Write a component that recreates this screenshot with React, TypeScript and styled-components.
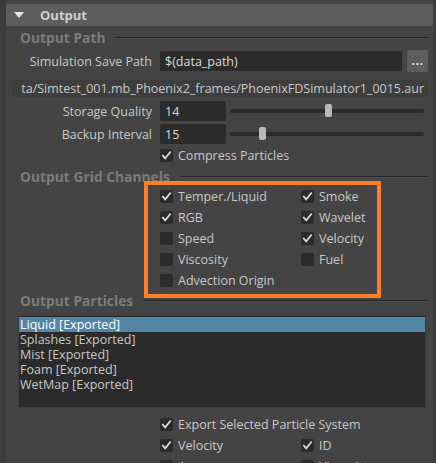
import * as React from "react";
import styled, { createGlobalStyle } from "styled-components";

const GlobalStyle = createGlobalStyle`
  html, body {
    margin: 0;
    padding: 0;
    background: #444444;
  }
  body {
    font-family: "Open Sans", "Liberation Sans", sans-serif;
    font-size: 12.5px;
    color: #c8c8c8;
  }
`;

const Window = styled.div`
  width: 436px;
  height: 463px;
  overflow: hidden;
  display: flex;
  background: #444444;
`;

const Gutter = styled.div<{ $w: number }>`
  width: ${(p) => p.$w}px;
  flex-shrink: 0;
  background: #3c3c3c;
`;

const Main = styled.div`
  flex: 1;
  min-width: 0;
  padding-top: 4px;
`;

const FrameHeader = styled.div`
  height: 22px;
  display: flex;
  align-items: center;
  gap: 16px;
  padding-left: 8px;
  background: #5d5d5d;
  border-radius: 2px;
  font-size: 13px;
  font-weight: 700;
  color: #cfcfcf;
`;

const Arrow = styled.div`
  width: 0;
  height: 0;
  border-left: 5.5px solid transparent;
  border-right: 5.5px solid transparent;
  border-top: 6px solid #e6e6e6;
`;

const Body = styled.div`
  padding: 0 5px 0 14px;
`;

const SectionHead = styled.div<{ $top: number }>`
  height: 14px;
  margin-top: ${(p) => p.$top}px;
  display: flex;
  align-items: center;
  gap: 10px;
  font-size: 13.8px;
  font-weight: 700;
  color: #7b7b7b;
  white-space: nowrap;
`;

const Rule = styled.div`
  flex: 1;
  height: 1px;
  background: #262626;
  box-shadow: 0 1px 0 #4c4c4c;
`;

const FormRow = styled.div<{ $top: number; $h: number }>`
  display: grid;
  grid-template-columns: 132px 1fr;
  column-gap: 8px;
  align-items: center;
  height: ${(p) => p.$h}px;
  margin-top: ${(p) => p.$top}px;
`;

const Label = styled.div`
  text-align: right;
  white-space: nowrap;
`;

const Control = styled.div`
  display: flex;
  align-items: center;
  gap: 5px;
  min-width: 0;
`;

const Field = styled.div<{ $w?: number }>`
  height: 20px;
  ${(p) => (p.$w ? `width: ${p.$w}px; flex-shrink: 0;` : "flex: 1;")}
  display: flex;
  align-items: center;
  padding-left: 5px;
  box-sizing: border-box;
  background: #2b2b2b;
  border-radius: 2px;
  color: #dcdcdc;
`;

const BrowseButton = styled.div`
  width: 21px;
  height: 22px;
  flex-shrink: 0;
  display: flex;
  align-items: flex-end;
  justify-content: center;
  padding-bottom: 5px;
  box-sizing: border-box;
  background: #5d5d5d;
  border-radius: 2px;
  color: #e0e0e0;
  font-weight: 700;
  line-height: 1;
  letter-spacing: 0.5px;
`;

const PathLine = styled.div`
  height: 17px;
  margin: 8px 0 0 -8px;
  display: flex;
  justify-content: flex-end;
  align-items: center;
  padding-right: 4px;
  overflow: hidden;
  white-space: nowrap;
  background: #3e3e3e;
  border-radius: 2px;
  color: #c8c8c8;
`;

const Slider = styled.div`
  position: relative;
  flex: 1;
  height: 20px;
  margin: 0 4px 0 -1px;
`;

const Track = styled.div`
  position: absolute;
  left: 0;
  right: 0;
  top: 8px;
  height: 4px;
  border-radius: 2px;
  background: #2b2b2b;
`;

const Thumb = styled.div`
  position: absolute;
  top: 3px;
  width: 7px;
  height: 13px;
  border-radius: 2px;
  background: #b9b9b9;
`;

const CheckRow = styled.div`
  display: flex;
  align-items: center;
  gap: 5px;
  white-space: nowrap;
  line-height: 15px;
`;

const Box = styled.div`
  width: 13px;
  height: 13px;
  flex-shrink: 0;
  border-radius: 2px;
  background: #2b2b2b;
  display: flex;
  align-items: center;
  justify-content: center;
`;

const CheckGrid = styled.div<{ $top: number }>`
  position: relative;
  margin: ${(p) => p.$top}px 0 0 140px;
  display: grid;
  grid-template-columns: 141px 1fr;
  grid-template-rows: repeat(5, 21px);
  grid-auto-flow: column;
`;

const PlainGrid = styled.div<{ $top: number }>`
  margin: ${(p) => p.$top}px 0 0 140px;
  display: grid;
  grid-template-columns: 141px 1fr;
  grid-auto-rows: 21px;
`;

const Highlight = styled.div`
  position: absolute;
  top: -5px;
  left: -16px;
  width: 237px;
  bottom: -7px;
  box-sizing: border-box;
  border: 4px solid #ff7f27;
  pointer-events: none;
`;

const ListBox = styled.div`
  width: 408px;
  height: 93px;
  margin: 8px 0 0 -2px;
  box-sizing: border-box;
  padding-top: 1px;
  background: #2b2b2b;
  border: 1px solid #3a3a3a;
  border-radius: 1px;
`;

const ListItem = styled.div<{ $selected?: boolean }>`
  height: 15px;
  line-height: 15px;
  padding-left: 1px;
  white-space: nowrap;
  background: ${(p) => (p.$selected ? "#5285a6" : "transparent")};
  color: ${(p) => (p.$selected ? "#ffffff" : "#c8c8c8")};
`;

const Tick = () => (
  <svg width="13" height="13" viewBox="0 0 13 13">
    <path d="M2.8 6.6 L5.2 9.4 L10.2 3.2" fill="none" stroke="#dedede" strokeWidth="1.7" strokeLinecap="square" />
  </svg>
);

const Check = ({ label, on }: { label: string; on?: boolean }) => (
  <CheckRow>
    <Box>{on && <Tick />}</Box>
    <span>{label}</span>
  </CheckRow>
);

const SliderField = ({ label, value, pos, top }: { label: string; value: string; pos: number; top: number }) => (
  <FormRow $top={top} $h={20}>
    <Label>{label}</Label>
    <Control>
      <Field $w={66}>{value}</Field>
      <Slider>
        <Track />
        <Thumb style={{ left: `calc((100% - 7px) * ${pos})` }} />
      </Slider>
    </Control>
  </FormRow>
);

const channels = [
  { label: "Temper./Liquid", on: true },
  { label: "RGB", on: true },
  { label: "Speed", on: false },
  { label: "Viscosity", on: false },
  { label: "Advection Origin", on: false },
  { label: "Smoke", on: true },
  { label: "Wavelet", on: true },
  { label: "Velocity", on: true },
  { label: "Fuel", on: false },
];

const particles = ["Liquid", "Splashes", "Mist", "Foam", "WetMap"];

const App = () => {
  return (
    <>
      <GlobalStyle />
      <Window>
        <Gutter $w={6} />
        <Main>
          <FrameHeader>
            <Arrow />
            <span>Output</span>
          </FrameHeader>
          <Body>
            <SectionHead $top={4}>
              <span>Output Path</span>
              <Rule />
            </SectionHead>
            <FormRow $top={6} $h={22}>
              <Label>Simulation Save Path</Label>
              <Control>
                <Field>$(data_path)</Field>
                <BrowseButton>...</BrowseButton>
              </Control>
            </FormRow>
            <PathLine>ta/Simtest_001.mb_Phoenix2_frames/PhoenixFDSimulator1_0015.aur</PathLine>
            <SliderField label="Storage Quality" value="14" pos={0.508} top={4} />
            <SliderField label="Backup Interval" value="15" pos={0.155} top={3} />
            <FormRow $top={1} $h={21}>
              <span />
              <Check label="Compress Particles" on />
            </FormRow>

            <SectionHead $top={3}>
              <span>Output Grid Channels</span>
              <Rule />
            </SectionHead>
            <CheckGrid $top={3}>
              {channels.map((c) => (
                <Check key={c.label} label={c.label} on={c.on} />
              ))}
              <Highlight />
            </CheckGrid>

            <SectionHead $top={2}>
              <span>Output Particles</span>
              <Rule />
            </SectionHead>
            <ListBox>
              {particles.map((name, i) => (
                <ListItem key={name} $selected={i === 0}>
                  {name} [Exported]
                </ListItem>
              ))}
            </ListBox>
            <PlainGrid $top={6}>
              <Check label="Export Selected Particle System" on />
              <span />
              <Check label="Velocity" on />
              <Check label="ID" on />
              <Check label="Age" />
              <Check label="Viscosity" />
            </PlainGrid>
          </Body>
        </Main>
        <Gutter $w={3} />
      </Window>
    </>
  );
};

export default App;
